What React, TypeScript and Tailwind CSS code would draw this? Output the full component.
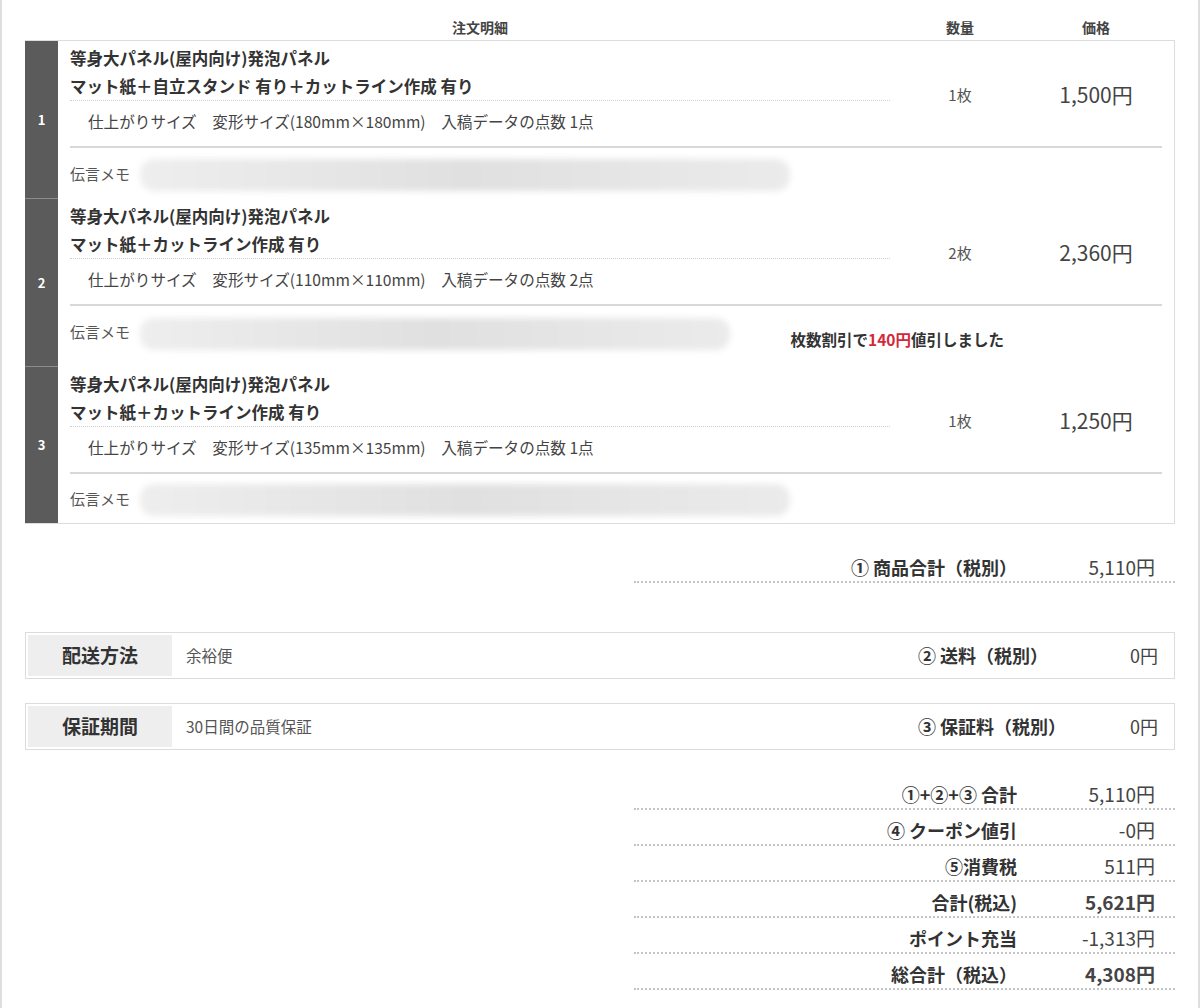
import React from "react";

interface Item {
  no: number;
  title: string;
  option: string;
  size: string;
  count: number;
  qty: string;
  price: string;
  blob: number;
  memoH: string;
  discount?: string;
}

const ITEMS: Item[] = [
  { no: 1, title: "等身大パネル(屋内向け)発泡パネル", option: "マット紙＋自立スタンド 有り＋カットライン作成 有り", size: "180mm×180mm", count: 1, qty: "1枚", price: "1,500円", blob: 650, memoH: "h-[51px]" },
  { no: 2, title: "等身大パネル(屋内向け)発泡パネル", option: "マット紙＋カットライン作成 有り", size: "110mm×110mm", count: 2, qty: "2枚", price: "2,360円", blob: 590, memoH: "h-[61px]", discount: "140円" },
  { no: 3, title: "等身大パネル(屋内向け)発泡パネル", option: "マット紙＋カットライン作成 有り", size: "135mm×135mm", count: 1, qty: "1枚", price: "1,250円", blob: 650, memoH: "h-[49px]" },
];

const TOTALS: { label: string; value: string; bold?: boolean }[] = [
  { label: "①+②+③ 合計", value: "5,110円" },
  { label: "④ クーポン値引", value: "-0円" },
  { label: "⑤消費税", value: "511円" },
  { label: "合計(税込)", value: "5,621円", bold: true },
  { label: "ポイント充当", value: "-1,313円" },
  { label: "総合計（税込）", value: "4,308円", bold: true },
];

// ── blurred memo ───────────────────────────────────────────────────────────────
function Blob({ width }: { width: number }) {
  return (
    <div
      className="h-[32px] rounded-[14px] bg-gradient-to-r from-[#eeeeee] via-[#e0e0e0] to-[#ebebeb] blur-[3px]"
      style={{ width }}
    />
  );
}

function SumRow({ label, value, bold }: { label: string; value: string; bold?: boolean }) {
  return (
    <div className="flex h-[36px] items-end border-b-2 border-dotted border-[#c4c4c4] pb-[2px]">
      <div className="flex-1 text-right text-[18px] font-bold leading-[24px] text-[#333]">{label}</div>
      <div className={`w-[158px] pr-[20px] text-right text-[19px] leading-[24px] text-[#444] ${bold ? "font-bold" : ""}`}>
        {value}
      </div>
    </div>
  );
}

function InfoBox({ title, value, label, price }: { title: string; value: string; label: string; price: string }) {
  return (
    <div className="flex h-[47px] border border-[#dcdcdc] p-[2px]">
      <div className="flex w-[144px] items-center justify-center bg-[#eeeeee] text-[19px] font-bold text-[#333]">{title}</div>
      <div className="ml-[14px] flex items-center text-[15.5px] text-[#555]">{value}</div>
      <div className="ml-auto flex w-[254px] items-center justify-between pr-[14px]">
        <span className="text-[18px] font-bold text-[#333]">{label}</span>
        <span className="text-[18px] text-[#444]">{price}</span>
      </div>
    </div>
  );
}

export default function App() {
  return (
    <div className="min-h-[1008px] w-full border-x-2 border-[#dedede] bg-white font-['Noto_Sans_CJK_JP','Noto_Sans',sans-serif] text-[#333]">
      <div className="px-[23px]">
        {/* header */}
        <div className="flex h-[40px] items-end pb-[3px] text-[14px] font-bold leading-[20px] text-[#444]">
          <div className="w-[45px]" />
          <div className="w-[820px] text-center">注文明細</div>
          <div className="w-[140px] text-center">数量</div>
          <div className="w-[132px] text-center">価格</div>
        </div>

        {/* items */}
        <div className="border border-l-0 border-[#dcdcdc]">
          {ITEMS.map((item, i) => (
            <div key={item.no} className="flex">
              <div
                className={`flex w-[33px] items-center justify-center bg-[#5b5b5b] text-[13px] font-bold text-white ${
                  i < ITEMS.length - 1 ? "border-b border-[#8c8c8c]" : ""
                }`}
              >
                {item.no}
              </div>
              <div className="flex-1 pl-[12px] pr-[12px]">
                <div className="flex border-b-2 border-[#d8d8d8]">
                  <div className="w-[820px]">
                    <div className="border-b border-dotted border-[#d0d0d0] pt-[3px] text-[16.5px] font-bold leading-[28px] text-[#333]">
                      <p>{item.title}</p>
                      <p>{item.option}</p>
                    </div>
                    <div className="flex h-[45px] items-center pb-[3px] pl-[18px] text-[15.6px] text-[#444]">
                      仕上がりサイズ　変形サイズ({item.size})　入稿データの点数 {item.count}点
                    </div>
                  </div>
                  <div className="flex w-[140px] items-center justify-center pt-[3px] text-[15px] text-[#555]">{item.qty}</div>
                  <div className="flex w-[132px] items-center justify-center pt-[3px] text-[21px] text-[#444]">{item.price}</div>
                </div>

                {item.discount ? (
                  <div className={`flex ${item.memoH} items-start`}>
                    <span className="mt-[16px] text-[15px] leading-[20px] text-[#555]">伝言メモ</span>
                    <div className="ml-[10px] mt-[12px]">
                      <Blob width={item.blob} />
                    </div>
                    <span className="ml-auto mr-[158px] mt-[23px] text-[15.5px] font-bold leading-[20px] text-[#333]">
                      枚数割引で<span className="text-[#d3283a]">{item.discount}</span>値引しました
                    </span>
                  </div>
                ) : (
                  <div className={`flex ${item.memoH} items-center pt-[2px]`}>
                    <span className="text-[15px] text-[#555]">伝言メモ</span>
                    <div className="ml-[10px]">
                      <Blob width={item.blob} />
                    </div>
                  </div>
                )}
              </div>
            </div>
          ))}
        </div>

        {/* subtotal */}
        <div className="ml-auto mt-[23px] w-[541px]">
          <SumRow label="① 商品合計（税別）" value="5,110円" />
        </div>

        <div className="mt-[49px]">
          <InfoBox title="配送方法" value="余裕便" label="② 送料（税別）" price="0円" />
        </div>
        <div className="mt-[24px]">
          <InfoBox title="保証期間" value="30日間の品質保証" label="③ 保証料（税別）" price="0円" />
        </div>

        {/* totals */}
        <div className="ml-auto mt-[24px] w-[541px]">
          {TOTALS.map(t => (
            <SumRow key={t.label} label={t.label} value={t.value} bold={t.bold} />
          ))}
        </div>
      </div>
    </div>
  );
}
